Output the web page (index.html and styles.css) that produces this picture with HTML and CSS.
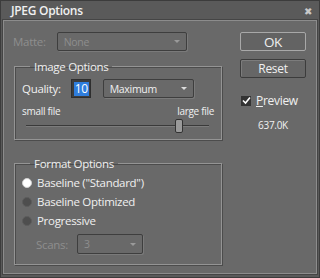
FILE: index.html
```html
<!DOCTYPE html>
<html lang="en">
<head>
    <meta charset="UTF-8">
    <link rel="stylesheet" href="styles.css">
</head>
<body>
<div class="dialog">
    <div class="titlebar">
        <span class="title">JPEG Options</span>
        <span class="close">&#10006;</span>
    </div>
    <div class="panel">
        <div class="left-col">
            <div class="matte-row">
                <span class="label disabled">Matte:</span>
                <div class="select matte-select disabled"><span>None</span><span class="caret"></span></div>
            </div>

            <fieldset class="group image-group">
                <legend>Image Options</legend>
                <div class="quality-row">
                    <span class="label">Quality:</span>
                    <div class="num-input"><span class="selected">10</span></div>
                    <div class="select quality-select"><span>Maximum</span><span class="caret"></span></div>
                </div>
                <div class="size-labels">
                    <span>small file</span>
                    <span>large file</span>
                </div>
                <div class="slider">
                    <div class="track"></div>
                    <div class="thumb"></div>
                </div>
            </fieldset>

            <fieldset class="group format-group">
                <legend>Format Options</legend>
                <div class="radio-row"><span class="radio checked"></span>Baseline ("Standard")</div>
                <div class="radio-row"><span class="radio"></span>Baseline Optimized</div>
                <div class="radio-row"><span class="radio"></span>Progressive</div>
                <div class="scans-row">
                    <span class="label disabled">Scans:</span>
                    <div class="select scans-select disabled"><span>3</span><span class="caret"></span></div>
                </div>
            </fieldset>
        </div>

        <div class="right-col">
            <div class="button ok">OK</div>
            <div class="button reset">Reset</div>
            <div class="check-row">
                <span class="checkbox">
                    <svg width="9" height="9" viewBox="0 0 9 9"><path d="M1 4.5 L3.5 7 L8 1.5" fill="none" stroke="#fff" stroke-width="1.6"/></svg>
                </span>
                <span><u>P</u>review</span>
            </div>
            <div class="file-size">637.0K</div>
        </div>
    </div>
</div>
</body>
</html>
```

FILE: styles.css
```css
body {
    margin: 0;
    font-family: "Open Sans", "Noto Sans", sans-serif;
    color: #f0f0f0;
    letter-spacing: -0.3px;
}

.dialog {
    width: 320px;
    height: 278px;
    box-sizing: border-box;
    background: #5a5a5a;
    border: 1px solid #3c3c3c;
    padding: 0 2px 3px 2px;
    display: flex;
    flex-direction: column;
}

.titlebar {
    height: 19px;
    display: flex;
    align-items: center;
    justify-content: space-between;
    padding: 0 5px 0 8px;
}

.title {
    font-size: 12px;
    font-weight: 600;
}

.close {
    font-size: 10px;
    color: #c8c8c8;
}

.panel {
    flex: 1;
    background: #696969;
    border: 1px solid #8c8c8c;
    box-shadow: 0 0 0 1px #454545;
    display: flex;
    padding: 11px 10px 0 10px;
}

.left-col {
    width: 208px;
}

.label {
    font-size: 11.5px;
}

.disabled {
    color: #8e8e8e;
}

.select {
    box-sizing: border-box;
    height: 19px;
    border: 1px solid #3e3e3e;
    border-radius: 2px;
    box-shadow: 1px 1px 0 #7a7a7a;
    display: flex;
    align-items: center;
    justify-content: space-between;
    padding: 0 6px;
    font-size: 10.5px;
}

.caret {
    width: 0;
    height: 0;
    border-left: 3px solid transparent;
    border-right: 3px solid transparent;
    border-top: 3px solid #ddd;
}

.select.disabled .caret {
    border-top-color: #9a9a9a;
}

.matte-row {
    display: flex;
    align-items: center;
    gap: 11px;
    margin-left: -1px;
}

.matte-select {
    width: 130px;
}

.group {
    margin: 0;
    border: 1px solid #949494;
    box-shadow: inset 1px 1px 0 #4c4c4c, 1px 1px 0 #4c4c4c;
    padding: 0 7px 0 7px;
}

.group legend {
    font-size: 11.5px;
    padding: 0 4px;
    margin-left: 8px;
}

.image-group {
    margin-top: 8px;
    height: 81px;
    box-sizing: border-box;
}

.format-group {
    margin-top: 16px;
    height: 109px;
    box-sizing: border-box;
}

.quality-row {
    display: flex;
    align-items: center;
    margin-top: 5px;
}

.num-input {
    margin-left: 10px;
    width: 20px;
    height: 19px;
    box-sizing: border-box;
    background: #3c3c3c;
    border: 1px solid #2e2e2e;
    display: flex;
    align-items: center;
    padding-left: 2px;
    font-size: 12px;
}

.selected {
    background: #2f7ddc;
    color: #fff;
    line-height: 14px;
    padding: 0 1px;
}

.quality-select {
    margin-left: 12px;
    width: 91px;
}

.size-labels {
    display: flex;
    justify-content: space-between;
    font-size: 10px;
    margin-top: 6px;
}

.slider {
    position: relative;
    height: 14px;
    margin: 1px 5px 0 4px;
}

.track {
    position: absolute;
    left: 0;
    right: 0;
    top: 6px;
    height: 1px;
    background: #3a3a3a;
    border-bottom: 1px solid #7c7c7c;
}

.thumb {
    position: absolute;
    left: 149px;
    top: 0;
    width: 6px;
    height: 12px;
    background: #9a9a9a;
    border: 1px solid #333;
    border-radius: 2px;
}

.radio-row {
    display: flex;
    align-items: center;
    gap: 5px;
    font-size: 11.5px;
    height: 19px;
}

.format-group .radio-row:first-of-type {
    margin-top: 2px;
}

.radio {
    width: 10px;
    height: 10px;
    box-sizing: border-box;
    border-radius: 50%;
    background: #4e4e4e;
    border: 1px solid #5c5c5c;
}

.radio.checked {
    background: #fff;
    border-color: #d0d0d0;
}

.scans-row {
    display: flex;
    align-items: center;
    gap: 9px;
    margin-top: 4px;
    padding-left: 14px;
}

.scans-select {
    width: 66px;
    height: 20px;
}

.right-col {
    margin-left: auto;
    width: 66px;
    display: flex;
    flex-direction: column;
    align-items: center;
}

.button {
    box-sizing: border-box;
    width: 66px;
    height: 19px;
    border-radius: 2px;
    display: flex;
    align-items: center;
    justify-content: center;
    font-size: 12px;
}

.ok {
    border: 1px solid #a8a8a8;
    background: #636363;
    font-size: 13.5px;
}

.reset {
    margin-top: 8px;
    border: 1px solid #3c3c3c;
    box-shadow: inset 1px 1px 0 #7c7c7c;
    background: #666;
}

.check-row {
    margin-top: 14px;
    display: flex;
    align-items: center;
    gap: 5px;
    font-size: 12px;
    align-self: flex-start;
    margin-left: 1px;
}

.checkbox {
    width: 10px;
    height: 10px;
    background: #333;
    display: flex;
    align-items: center;
    justify-content: center;
}

.file-size {
    margin-top: 9px;
    font-size: 10px;
}
```
